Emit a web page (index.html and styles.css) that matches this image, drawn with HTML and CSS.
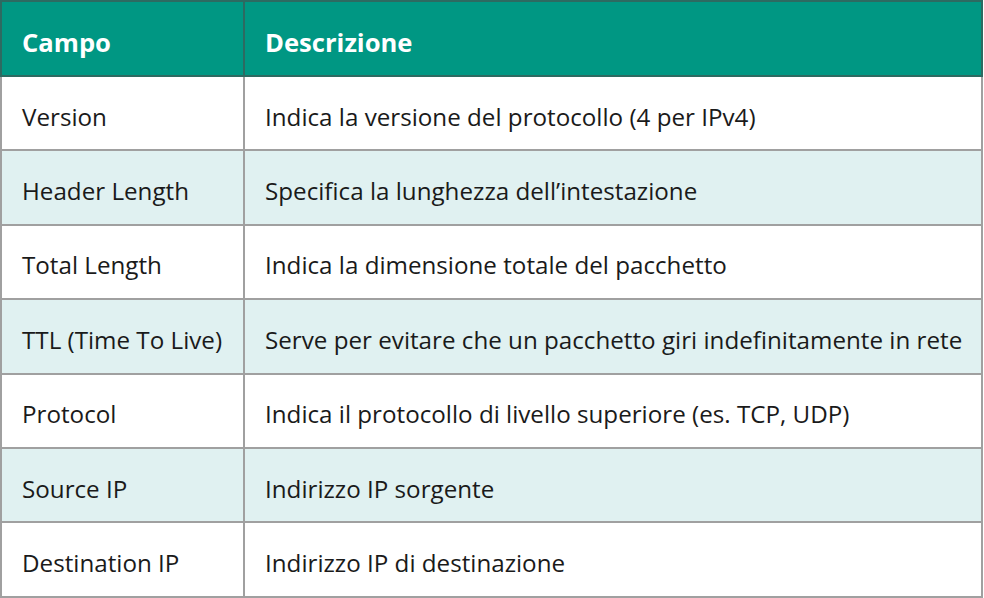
FILE: index.html
```html
<!DOCTYPE html>
<html>
<head>
<meta charset="utf-8">
<link rel="stylesheet" href="styles.css">
</head>
<body>
<table class="fields">
  <thead>
    <tr><th class="c1">Campo</th><th>Descrizione</th></tr>
  </thead>
  <tbody>
    <tr><td>Version</td><td>Indica la versione del protocollo (4 per IPv4)</td></tr>
    <tr class="alt"><td>Header Length</td><td>Specifica la lunghezza dell’intestazione</td></tr>
    <tr><td>Total Length</td><td>Indica la dimensione totale del pacchetto</td></tr>
    <tr class="alt"><td>TTL (Time To Live)</td><td>Serve per evitare che un pacchetto giri indefinitamente in rete</td></tr>
    <tr><td>Protocol</td><td>Indica il protocollo di livello superiore (es. TCP, UDP)</td></tr>
    <tr class="alt"><td>Source IP</td><td>Indirizzo IP sorgente</td></tr>
    <tr><td>Destination IP</td><td>Indirizzo IP di destinazione</td></tr>
  </tbody>
</table>
</body>
</html>
```
FILE: styles.css
```css
html, body {
  margin: 0;
  padding: 0;
  background: #ffffff;
}
.fields {
  border-collapse: collapse;
  width: 983px;
  font-family: "Open Sans", "Noto Sans", sans-serif;
  font-size: 24.2px;
  color: #1a1a1a;
  table-layout: fixed;
}
.fields th, .fields td {
  text-align: left;
  padding: 6px 0 0 20px;
  border: 2px solid #a0a0a0;
  white-space: nowrap;
  box-sizing: border-box;
}
.fields th {
  background: #009783;
  color: #ffffff;
  font-weight: 700;
  height: 75px;
  border-color: #2d6a61;
  font-size: 25.6px;
  padding-top: 8px;
}
.fields th.c1 { width: 243px; }
.fields td { height: 74.4px; }
.fields tr.alt td { background: #e0f1f1; }
```
